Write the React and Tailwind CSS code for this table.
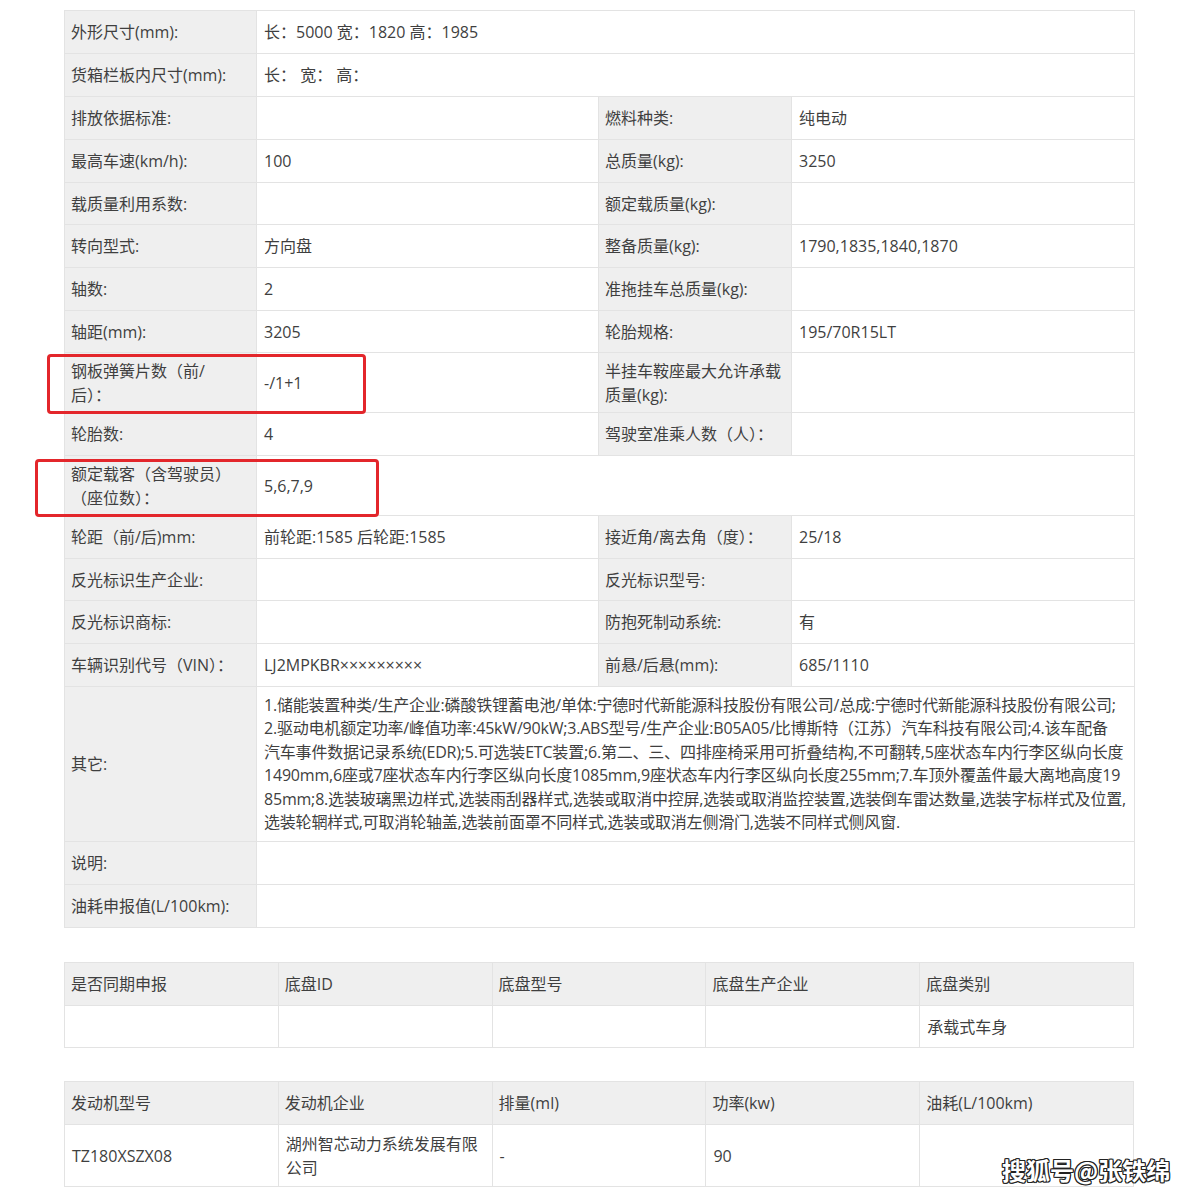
const font = { fontFamily: '"Open Sans", "Noto Sans CJK SC", sans-serif' };

const L = "bg-[#efefef] border border-[#e3e3e3] pl-[6px] pr-1 align-middle";
const V = "bg-white border border-[#e3e3e3] pl-[7px] pr-1 align-middle";

const pairRows = [
  ["排放依据标准:", "", "燃料种类:", "纯电动", "h-[43px]"],
  ["最高车速(km/h):", "100", "总质量(kg):", "3250", "h-[43px]"],
  ["载质量利用系数:", "", "额定载质量(kg):", "", "h-[42px]"],
  ["转向型式:", "方向盘", "整备质量(kg):", "1790,1835,1840,1870", "h-[43px]"],
  ["轴数:", "2", "准拖挂车总质量(kg):", "", "h-[43px]"],
  ["轴距(mm):", "3205", "轮胎规格:", "195/70R15LT", "h-[42px]"],
];

const otherLines = [
  "1.储能装置种类/生产企业:磷酸铁锂蓄电池/单体:宁德时代新能源科技股份有限公司/总成:宁德时代新能源科技股份有限公司;",
  "2.驱动电机额定功率/峰值功率:45kW/90kW;3.ABS型号/生产企业:B05A05/比博斯特（江苏）汽车科技有限公司;4.该车配备",
  "汽车事件数据记录系统(EDR);5.可选装ETC装置;6.第二、三、四排座椅采用可折叠结构,不可翻转,5座状态车内行李区纵向长度",
  "1490mm,6座或7座状态车内行李区纵向长度1085mm,9座状态车内行李区纵向长度255mm;7.车顶外覆盖件最大离地高度19",
  "85mm;8.选装玻璃黑边样式,选装雨刮器样式,选装或取消中控屏,选装或取消监控装置,选装倒车雷达数量,选装字标样式及位置,",
  "选装轮辋样式,可取消轮轴盖,选装前面罩不同样式,选装或取消左侧滑门,选装不同样式侧风窗.",
];

function SmallTable({ head, body, bodyH, className }) {
  return (
    <table className={"w-[1070px] border-collapse table-fixed " + className}>
      <tbody>
        <tr className="h-[43px]">
          {head.map((h, i) => (
            <td key={i} className={L}>{h}</td>
          ))}
        </tr>
        <tr className={bodyH}>
          {body.map((b, i) => (
            <td key={i} className={V + " leading-[24px]"}>{b}</td>
          ))}
        </tr>
      </tbody>
    </table>
  );
}

export default function App() {
  return (
    <div className="relative w-[1200px] h-[1200px] bg-white text-[16px] text-[#3f3f3f]" style={font}>
      <div className="pt-[10px] pl-[64px] flex flex-col">
        <table className="w-[1070px] border-collapse table-fixed">
          <colgroup>
            <col className="w-[192px]" />
            <col className="w-[342px]" />
            <col className="w-[193px]" />
            <col className="w-[343px]" />
          </colgroup>
          <tbody>
            <tr className="h-[43px]">
              <td className={L}>外形尺寸(mm):</td>
              <td className={V} colSpan={3}>长：5000 宽：1820 高：1985</td>
            </tr>
            <tr className="h-[43px]">
              <td className={L}>货箱栏板内尺寸(mm):</td>
              <td className={V} colSpan={3}>长：&nbsp;宽：&nbsp;高：</td>
            </tr>
            {pairRows.map(([a, b, c, d, h]) => (
              <tr key={a} className={h}>
                <td className={L}>{a}</td>
                <td className={V}>{b}</td>
                <td className={L}>{c}</td>
                <td className={V}>{d}</td>
              </tr>
            ))}
            <tr className="h-[60px]">
              <td className={L + " leading-[24px]"}>钢板弹簧片数（前/<br />后）：</td>
              <td className={V}>-/1+1</td>
              <td className={L + " leading-[24px]"}>半挂车鞍座最大允许承载<br />质量(kg):</td>
              <td className={V}></td>
            </tr>
            <tr className="h-[43px]">
              <td className={L}>轮胎数:</td>
              <td className={V}>4</td>
              <td className={L}>驾驶室准乘人数（人）：</td>
              <td className={V}></td>
            </tr>
            <tr className="h-[60px]">
              <td className={L + " leading-[24px]"}>额定载客（含驾驶员）<br />（座位数）：</td>
              <td className={V} colSpan={3}>5,6,7,9</td>
            </tr>
            <tr className="h-[43px]">
              <td className={L}>轮距（前/后)mm:</td>
              <td className={V}>前轮距:1585 后轮距:1585</td>
              <td className={L}>接近角/离去角（度）：</td>
              <td className={V}>25/18</td>
            </tr>
            <tr className="h-[42px]">
              <td className={L}>反光标识生产企业:</td>
              <td className={V}></td>
              <td className={L}>反光标识型号:</td>
              <td className={V}></td>
            </tr>
            <tr className="h-[43px]">
              <td className={L}>反光标识商标:</td>
              <td className={V}></td>
              <td className={L}>防抱死制动系统:</td>
              <td className={V}>有</td>
            </tr>
            <tr className="h-[43px]">
              <td className={L}>车辆识别代号（VIN）：</td>
              <td className={V}>LJ2MPKBR×××××××××</td>
              <td className={L}>前悬/后悬(mm):</td>
              <td className={V}>685/1110</td>
            </tr>
            <tr className="h-[155px]">
              <td className={L}>其它:</td>
              <td className={V} colSpan={3}>
                <div className="leading-[23.5px] tracking-[-0.2px]">
                  {otherLines.map((t, i) => (
                    <div key={i} className="whitespace-nowrap">{t}</div>
                  ))}
                </div>
              </td>
            </tr>
            <tr className="h-[43px]">
              <td className={L}>说明:</td>
              <td className={V} colSpan={3}></td>
            </tr>
            <tr className="h-[43px]">
              <td className={L}>油耗申报值(L/100km):</td>
              <td className={V} colSpan={3}></td>
            </tr>
          </tbody>
        </table>

        <SmallTable
          className="mt-[34px]"
          head={["是否同期申报", "底盘ID", "底盘型号", "底盘生产企业", "底盘类别"]}
          body={["", "", "", "", "承载式车身"]}
          bodyH="h-[42px]"
        />

        <SmallTable
          className="mt-[33px]"
          head={["发动机型号", "发动机企业", "排量(ml)", "功率(kw)", "油耗(L/100km)"]}
          body={["TZ180XSZX08", <>湖州智芯动力系统发展有限<br />公司</>, "-", "90", ""]}
          bodyH="h-[62px]"
        />
      </div>

      {/* red annotation boxes */}
      <div className="absolute left-[47px] top-[354px] w-[319px] h-[60px] border-[3px] border-[#e3262b] rounded-[4px]" />
      <div className="absolute left-[35px] top-[459px] w-[344px] h-[58px] border-[3px] border-[#e3262b] rounded-[4px]" />

      {/* watermark */}
      <div
        className="absolute left-[1002px] top-[1154px] text-[24px] font-bold text-white leading-[32px] whitespace-nowrap"
        style={{
          fontFamily: '"Noto Sans CJK SC", sans-serif',
          textShadow:
            "1px 1px 0 #222, -1px -1px 0 #222, 1px -1px 0 #222, -1px 1px 0 #222, 0 1px 0 #222, 0 -1px 0 #222, 1px 0 0 #222, -1px 0 0 #222",
        }}
      >
        搜狐号@张铁绵
      </div>
    </div>
  );
}
